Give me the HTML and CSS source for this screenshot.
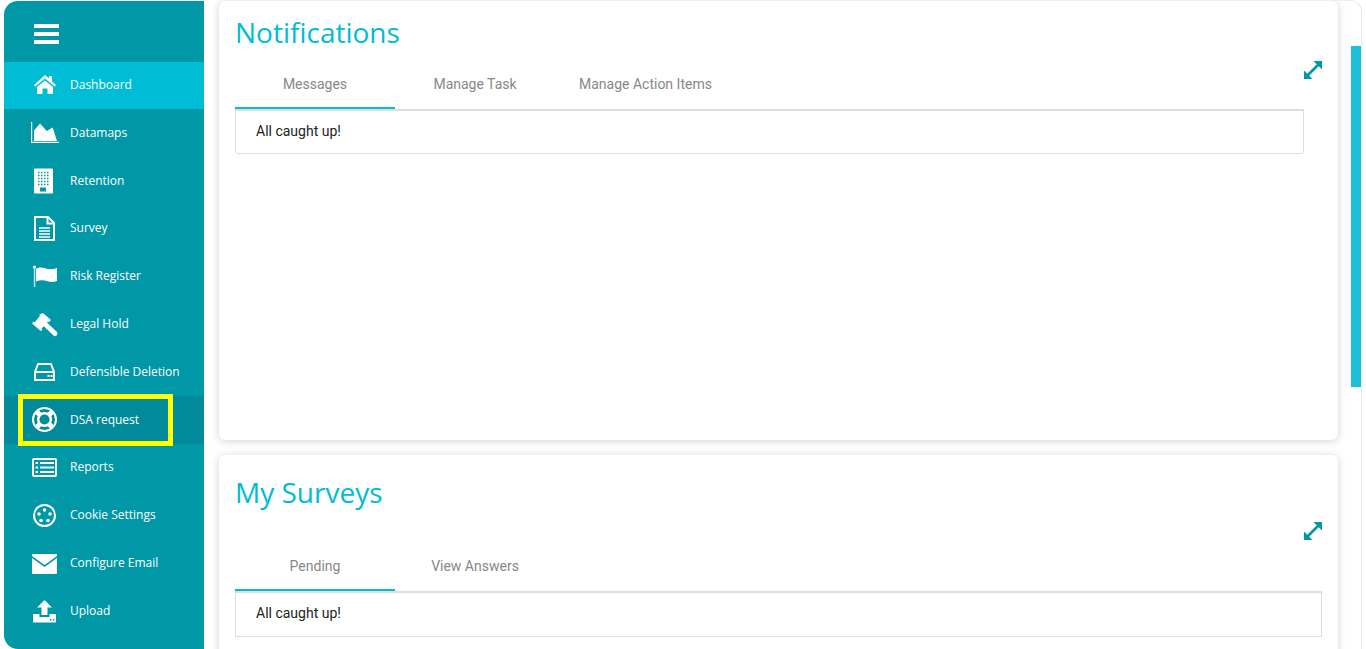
FILE: index.html
```html
<!DOCTYPE html>
<html lang="en">
<head>
<meta charset="utf-8">
<title>Dashboard</title>
<link rel="stylesheet" href="styles.css">
</head>
<body>
<div class="app">
  <nav class="sidebar">
    <div class="burger"><span></span><span></span><span></span></div>
    <a class="item active"><svg class="ico" viewBox="0 0 30 30"><path d="M15 4 19 7.500V5h3v5.500l4 3.500-1.300 1.600L15 7.500 5.300 15.600 4 14Z"/><path d="M15 9.500 23 16v7h-5.500v-5.500h-5V23H7v-7Z"/></svg><span>Dashboard</span></a>
    <a class="item"><svg class="ico" viewBox="0 0 30 30"><path d="M1 4h1.200v19.800H29V25H1Z"/><path d="M4 23V12.500L10 5.500l6.700 7.500 6-3.500L27 23Z"/></svg><span>Datamaps</span></a>
    <a class="item"><svg class="ico" viewBox="0 0 30 30"><rect x="4" y="2.500" width="19" height="25" rx="1"/><path class="dots" d="M8 6.500h11M8 9.500h11M8 12.500h11M8 15.500h11M8 18.500h11"/><rect class="cut" x="10" y="21.500" width="6" height="4"/></svg><span>Retention</span></a>
    <a class="item"><svg class="ico" viewBox="0 0 30 30"><path class="line bold" d="M5 3h13l6 6v17H5Z"/><path class="line bold" d="M17.500 3v6.500H24"/><path class="line" d="M9 14h11M9 17h11M9 20h11M9 23h11"/></svg><span>Survey</span></a>
    <a class="item"><svg class="ico" viewBox="0 0 30 30"><rect class="pole" x="3.800" y="5" width="1.500" height="20"/><circle cx="4.500" cy="5" r="1.600"/><path d="M6 7c4-2.500 7-1.500 10-.5s7 1 11-.5v13c-4 1.500-7 1-10 0s-7-1.500-11 .500Z"/></svg><span>Risk Register</span></a>
    <a class="item"><svg class="ico" viewBox="0 0 30 30"><path d="M13 3l8 7-2 2.200-1-.700-6.500 7.300 1 1-1.800 1.200-8.700-7.500 1.800-2 1 .800L10 5.800l-1-1Z"/><path class="handle" d="M15.500 14.500 25 23.500"/></svg><span>Legal Hold</span></a>
    <a class="item"><svg class="ico" viewBox="0 0 30 30"><path class="line bold" d="M5 15 8 7h13l3 8v8H5Z"/><path class="line bold" d="M5 15h19"/><rect x="17.500" y="18" width="2" height="2"/><rect x="20.500" y="18" width="2" height="2"/></svg><span>Defensible Deletion</span></a>
    <a class="item current"><svg class="ico" viewBox="0 0 30 30"><circle class="line bold" cx="14.500" cy="14.500" r="11.500"/><circle class="ring" cx="14.500" cy="14.500" r="6.300"/><path class="spokes" d="M6.700 6.700l3.300 3.300M22.300 6.700l-3.300 3.300M6.700 22.300l3.300-3.300M22.300 22.300l-3.300-3.300"/></svg><span>DSA request</span></a>
    <a class="item"><svg class="ico" viewBox="0 0 30 30"><rect class="line bold" x="3" y="6" width="23" height="17" rx="1"/><path class="line bold" d="M5.500 10h2.500M5.500 14.500h2.500M5.500 19h2.500M10 10h14M10 14.500h14M10 19h14"/></svg><span>Reports</span></a>
    <a class="item"><svg class="ico" viewBox="0 0 30 30"><circle class="line bold" cx="14.500" cy="14.500" r="10.500"/><circle cx="14.500" cy="9" r="1.800"/><circle cx="9" cy="13" r="1.800"/><circle cx="20" cy="13" r="1.800"/><circle cx="11" cy="19.500" r="1.800"/><circle cx="18" cy="19.500" r="1.800"/></svg><span>Cookie Settings</span></a>
    <a class="item"><svg class="ico" viewBox="0 0 30 30"><path d="M3 5h23c.600 0 1 .400 1 1v1L14.500 16 2 7V6c0-.600.400-1 1-1Z"/><path d="M2 9l12.500 9L27 9v15c0 .600-.400 1-1 1H3c-.600 0-1-.400-1-1Z"/></svg><span>Configure Email</span></a>
    <a class="item"><svg class="ico" viewBox="0 0 30 30"><path d="M14.500 4 22 11.500h-4.500V19h-6v-7.500H7Z"/><path d="M3 18h6.500v3h10v-3H26v7.500c0 .500-.500 1-1 1H4c-.500 0-1-.500-1-1Z"/><rect class="cut" x="20" y="23" width="1.500" height="1.500"/><rect class="cut" x="23" y="23" width="1.500" height="1.500"/></svg><span>Upload</span></a>
    <div class="mark"></div>
  </nav>
  <main class="content">
    <section class="card first">
      <h2 class="title">Notifications</h2>
      <div class="body">
        <div class="column">
          <div class="tabs">
            <span class="tab on">Messages</span>
            <span class="tab">Manage Task</span>
            <span class="tab">Manage Action Items</span>
          </div>
          <div class="panel round">All caught up!</div>
        </div>
        <svg class="expand" viewBox="0 0 18 18"><path d="M9.500 0H18V8.500L14.700 5.200 5.200 14.700 8.500 18H0V9.500L3.300 12.800 12.800 3.300Z"/></svg>
      </div>
    </section>
    <section class="card second">
      <h2 class="title">My Surveys</h2>
      <svg class="expand floating" viewBox="0 0 18 18"><path d="M9.500 0H18V8.500L14.700 5.200 5.200 14.700 8.500 18H0V9.500L3.300 12.800 12.800 3.300Z"/></svg>
      <div class="tabs">
        <span class="tab on">Pending</span>
        <span class="tab">View Answers</span>
      </div>
      <div class="panel">All caught up!</div>
    </section>
  </main>
  <div class="scroll"><div class="thumb"></div></div>
</div>
</body>
</html>
```
FILE: styles.css
```css
* { box-sizing: border-box; }
html, body { height: 100%; margin: 0; overflow: hidden; background: #fff; }
body { font-family: Roboto, "Liberation Sans", sans-serif; }
.app { display: flex; height: 649px; padding: 1px 4px 0; position: relative; overflow: hidden; }
.sidebar { position: relative; flex: 0 0 200px; background: #0097a7; border-radius: 14px 0 0 14px; color: #fff; }
.burger { height: 60.700px; padding: 23px 0 0 30px; display: flex; flex-direction: column; gap: 4px; }
.burger span { display: block; width: 25px; height: 4px; background: #fff; }
.item { display: flex; align-items: center; height: 47.800px; padding-left: 26px; font: 12px "Open Sans", sans-serif; color: #fff; }
.item span { margin-left: 10px; padding-bottom: 2px; }
.item.active { background: #00bcd4; }
.item.current { background: #008a9a; }
.ico { width: 30px; height: 30px; flex: none; fill: #fff; }
.ico .dots { fill: none; stroke: #0097a7; stroke-width: 1.500; stroke-dasharray: 1.500 1.500; }
.ico .cut { fill: #0097a7; }
.ico .line { fill: none; stroke: #fff; stroke-width: 1.500; }
.ico .bold { stroke-width: 2; }
.ico .pole { opacity: .75; }
.ico .handle { fill: none; stroke: #fff; stroke-width: 5; stroke-linecap: round; }
.ico .ring { fill: none; stroke: #fff; stroke-width: 2.500; }
.ico .spokes { fill: none; stroke: #fff; stroke-width: 5; }
.mark { position: absolute; left: 14px; top: 393px; width: 155px; height: 52px; border: 5px solid #ffff00; }
.content { flex: 0 0 1118px; margin-left: 15px; display: flex; flex-direction: column; gap: 15px; }
.card { background: #fff; border-radius: 6px; box-shadow: 0 1px 8px rgba(0,0,0,.18); padding: 0 16px; position: relative; }
.card.first { height: 439px; flex: none; }
.card.second { flex: none; height: 260px; }
.title { margin: 0; font: 400 28px/38px "Open Sans", sans-serif; color: #00bcd4; padding-top: 12px; }
.second .title { padding-top: 18px; }
.body { display: flex; align-items: flex-start; margin-top: 8px; }
.column { flex: 0 0 1069px; }
.tabs { display: flex; border-bottom: 2px solid #ddd; }
.second .tabs { margin-top: 30px; }
.tab { min-width: 160px; height: 50px; padding: 0 24px 1px; display: flex; align-items: center; justify-content: center; font-size: 14px; color: #888; }
.tab.on { box-shadow: inset 0 -2px 0 #00bcd4; }
.panel { height: 44px; padding: 0 20px 4px; border: 1px solid #ddd; border-top: 0; display: flex; align-items: center; font-size: 14px; color: #222; }
.panel.round { height: 44px; padding-bottom: 2px; border-radius: 0 0 3px 3px; margin-top: -1px; border-top: 1px solid #ddd; }
.expand { width: 18px; height: 18px; fill: #0097a7; flex: none; }
.body .expand { margin-top: 2px; }
.floating { position: absolute; left: 1085px; top: 67px; }
.scroll { position: absolute; right: 4px; top: 0; width: 29px; height: 649px; border-top: 1px solid #eee; border-right: 1px solid #e6e6e6; border-radius: 0 12px 0 0; }
.thumb { position: absolute; right: 0; top: 45px; width: 10px; height: 341px; background: #1cc0d8; }
```
